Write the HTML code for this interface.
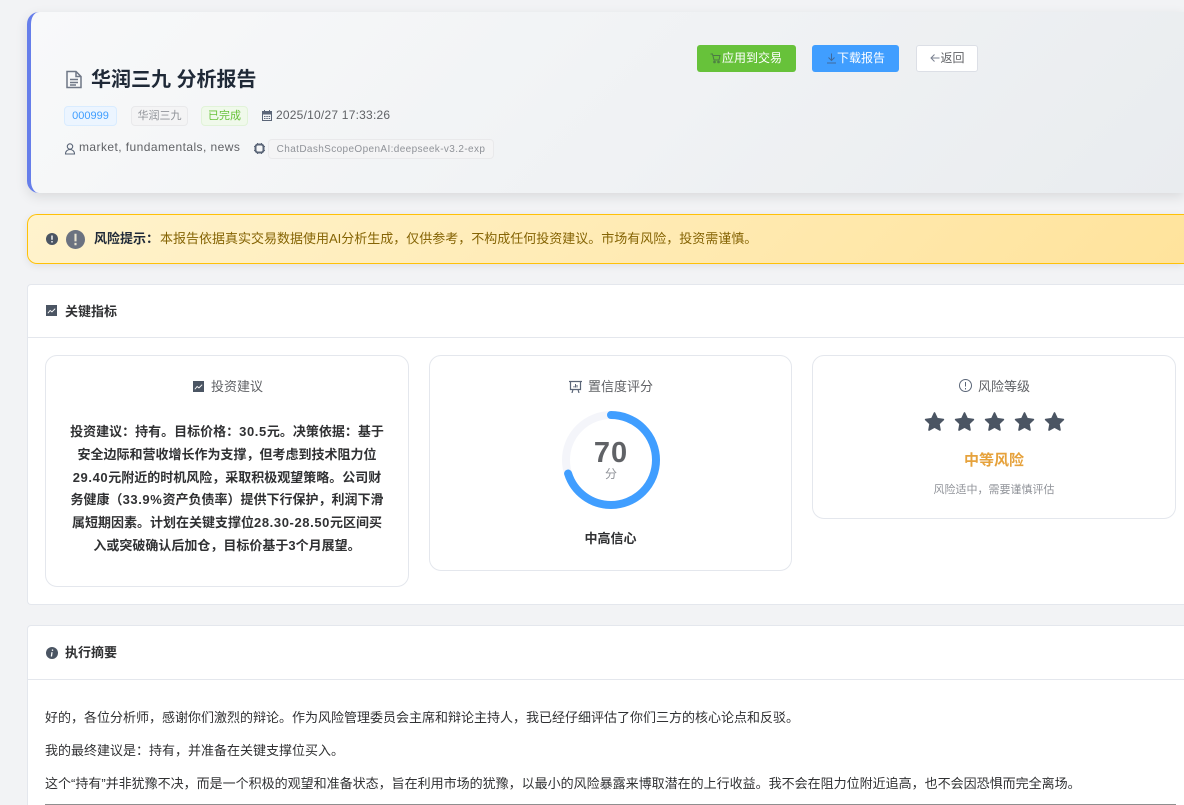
<!DOCTYPE html>
<html lang="zh-CN"><head><meta charset="utf-8"><title>华润三九 分析报告</title>
<style>
html,body{margin:0;padding:0;width:1184px;height:805px;overflow:hidden;background:#f2f3f5}
body{position:relative;font-family:"WenQuanYi Zen Hei","Liberation Sans","Noto Sans CJK SC",sans-serif;color:#606266}
.a{position:absolute;white-space:nowrap;line-height:1.2}
.card{position:absolute;box-sizing:border-box;background:#fff;border:1px solid #e4e7ed;border-right:0;border-radius:4px 0 0 4px}
.in{position:absolute;box-sizing:border-box;background:#fff;border:1px solid #e4e7ed;border-radius:12px}
.tag{position:absolute;box-sizing:border-box;height:20px;line-height:18px;font-size:11px;text-align:center;border-radius:4px;border:1px solid}
.btn{position:absolute;box-sizing:border-box;height:27px;line-height:26px;font-size:12px;text-align:center;border-radius:3px;white-space:nowrap}
svg{position:absolute;display:block}
.c{text-align:center}
.n{letter-spacing:.6px}
</style></head><body>
<div style="position:absolute;left:27px;top:12px;width:1157px;height:181px;box-sizing:border-box;border-left:4px solid #667eea;border-radius:12px 0 0 12px;background:linear-gradient(135deg,#f8f9fa,#e9ecef);box-shadow:0 4px 12px rgba(0,0,0,.1)"></div>

<svg style="left:65px;top:70px" width="18" height="19" viewBox="0 0 18 19" fill="none" stroke="#6f7786" stroke-width="1.5"><path d="M2 1.500h9l5 5v11H2zM11 1.500v5h5M5 9.500h8M5 12.500h8M5 15h6"/></svg>
<div class="a" style="left:91px;top:68px;font-size:20px;font-weight:700;color:#1f2937">华润三九 分析报告</div>

<div class="tag" style="left:64px;top:106px;width:53px;background:#ecf5ff;border-color:#d9ecff;color:#409eff">000999</div>
<div class="tag" style="left:131px;top:106px;width:57px;background:#f4f4f5;border-color:#e9e9eb;color:#909399">华润三九</div>
<div class="tag" style="left:201px;top:106px;width:47px;background:#f0f9eb;border-color:#e1f3d8;color:#67c23a">已完成</div>
<svg style="left:261px;top:110px" width="12" height="12" viewBox="0 0 12 12"><path fill="#5b6678" d="M1 1h2V0h1v1h4V0h1v1h2v10H1zM2 4.500V10h8V4.500z"/><path fill="#5b6678" d="M3 6h1.500v1H3zM5.300 6h1.500v1H5.300zM7.600 6h1.500v1H7.600zM3 8h1.500v1H3zM5.300 8h1.500v1H5.300zM7.600 8h1.500v1H7.600z"/></svg>
<div class="a" style="left:276px;top:108px;font-size:12px;letter-spacing:.22px;color:#606266">2025/10/27 17:33:26</div>

<svg style="left:64px;top:142px" width="12" height="13" viewBox="0 0 12 13" fill="none" stroke="#5b6678" stroke-width="1.100"><circle cx="6" cy="4.500" r="2.700"/><path d="M1.500 12c0-6 9-6 9 0z"/></svg>
<div class="a" style="left:79px;top:140px;font-size:12px;letter-spacing:.43px;color:#606266">market, fundamentals, news</div>
<svg style="left:253px;top:142px" width="13" height="13" viewBox="0 0 13 13" fill="none" stroke="#5b6678" stroke-width="2"><rect x="2.500" y="2.500" width="8" height="8" rx="2.500"/><path stroke-width="1" d="M4.500 1v1.500M8.500 1v1.500M4.500 10.500V12M8.500 10.500V12M1 4.500h1.500M1 8.500h1.500M10.500 4.500H12M10.500 8.500H12"/></svg>
<div class="tag" style="left:268px;top:139px;width:226px;line-height:19px;background:#f4f4f5;border-color:#e9e9eb;color:#909399;font-size:10px;letter-spacing:.38px">ChatDashScopeOpenAI:deepseek-v3.2-exp</div>

<div class="btn" style="left:697px;top:45px;width:99px;background:#67c23a;color:#fff"><svg style="left:13px;top:8px" width="11" height="11" viewBox="0 0 11 11" fill="none" stroke="#4c7a45" stroke-width="1"><path d="M0.500 1h2l1.500 6h5l1-4.500H3"/><circle cx="4.500" cy="9" r=".8"/><circle cx="8.500" cy="9" r=".8"/></svg><span style="padding-left:11px">应用到交易</span></div>
<div class="btn" style="left:812px;top:45px;width:87px;background:#409eff;color:#fff"><svg style="left:14px;top:8px" width="11" height="11" viewBox="0 0 11 11" fill="none" stroke="#3f6a9e" stroke-width="1"><path d="M5.500 0.500v6.500M2.500 4.500l3 3 3-3M1 10h9"/></svg><span style="padding-left:11px">下载报告</span></div>
<div class="btn" style="left:916px;top:45px;width:62px;background:#fff;border:1px solid #dcdfe6;line-height:24px;color:#606266"><svg style="left:13px;top:7px" width="10" height="10" viewBox="0 0 10 10" fill="none" stroke="#7a8090" stroke-width="1"><path d="M9.500 5H1M4.500 1.500L1 5l3.500 3.500"/></svg><span style="padding-left:11px">返回</span></div>

<div style="position:absolute;left:27px;top:214px;width:1157px;height:50px;box-sizing:border-box;border:1px solid #ffc107;border-right:0;border-radius:10px 0 0 10px;background:linear-gradient(135deg,#fff3cd,#ffe39c);box-shadow:0 2px 8px rgba(0,0,0,.08)"></div>
<svg style="left:46px;top:233px" width="12" height="12" viewBox="0 0 12 12"><circle cx="6" cy="6" r="6" fill="#4b5563"/><path stroke="#fff" stroke-width="1.400" d="M6 2.500v4.200M6 8v1.500"/></svg>
<svg style="left:66px;top:230px" width="19" height="19" viewBox="0 0 20 20"><circle cx="10" cy="10" r="10" fill="#6b7280"/><path stroke="#e9e4d0" stroke-width="2.200" d="M10 4v8M10 13.500v2.500"/></svg>
<div class="a" style="left:94px;top:231px;font-size:13px;font-weight:700;color:#1f2937">风险提示：</div>
<div class="a" style="left:160px;top:231px;font-size:13px;color:#856404">本报告依据真实交易数据使用AI分析生成，仅供参考，不构成任何投资建议。市场有风险，投资需谨慎。</div>

<div class="card" style="left:27px;top:284px;width:1157px;height:321px"></div>
<div style="position:absolute;left:28px;top:337px;width:1156px;height:1px;background:#e4e7ed"></div>
<svg style="left:46px;top:305px" width="11" height="11" viewBox="0 0 12 12"><rect width="12" height="12" fill="#4b5563"/><path fill="none" stroke="#fff" stroke-width="1" d="M2 9l2.500-3 2 1.500L10 4"/></svg>
<div class="a" style="left:65px;top:304px;font-size:13px;color:#303133;font-weight:700">关键指标</div>

<div class="in" style="left:45px;top:355px;width:364px;height:232px"></div>
<svg style="left:193px;top:381px" width="11" height="11" viewBox="0 0 12 12"><rect width="12" height="12" fill="#4b5563"/><path fill="none" stroke="#fff" stroke-width="1" d="M2 9l2.500-3 2 1.500L10 4"/></svg>
<div class="a" style="left:211px;top:379px;font-size:13px;color:#606266">投资建议</div>
<div class="a c" style="left:62px;top:421px;width:330px;font-size:13px;line-height:22.800px;font-weight:700;color:#303133">投资建议：持有。目标价格：<span class="n">30.5</span>元。决策依据：基于<br>安全边际和营收增长作为支撑，但考虑到技术阻力位<br><span class="n">29.40</span>元附近的时机风险，采取积极观望策略。公司财<br>务健康（<span class="n">33.9%</span>资产负债率）提供下行保护，利润下滑<br>属短期因素。计划在关键支撑位<span class="n">28.30-28.50</span>元区间买<br>入或突破确认后加仓，目标价基于3个月展望。</div>

<div class="in" style="left:429px;top:355px;width:363px;height:216px"></div>
<svg style="left:569px;top:380px" width="13" height="13" viewBox="0 0 13 13" fill="none" stroke="#5b6678" stroke-width="1.200"><path d="M0 1.500h13M1.500 1.500v8h10v-8M4 9.500l-1 3.500M9 9.500l1 3.500"/><path stroke-width="1" d="M5 7.500V6M6.500 7.500V4M8 7.500V5"/></svg>
<div class="a" style="left:588px;top:379px;font-size:13px;color:#606266">置信度评分</div>
<svg style="left:561px;top:410px" width="100" height="100" viewBox="0 0 100 100" fill="none"><circle cx="50" cy="50" r="45" stroke="#f4f5fa" stroke-width="8"/><circle cx="50" cy="50" r="45" stroke="#409eff" stroke-width="8" stroke-linecap="round" stroke-dasharray="197.900 282.700" transform="rotate(-90 50 50)"/></svg>
<div class="a c" style="left:561px;top:436px;width:100px;font-size:29px;letter-spacing:1px;font-weight:700;color:#606266">70</div>
<div class="a c" style="left:561px;top:467px;width:100px;font-size:12px;color:#909399">分</div>
<div class="a c" style="left:429px;top:531px;width:363px;font-size:13px;font-weight:700;color:#303133">中高信心</div>

<div class="in" style="left:812px;top:355px;width:364px;height:164px"></div>
<svg style="left:959px;top:379px" width="13" height="13" viewBox="0 0 13 13" fill="none" stroke="#5b6678" stroke-width="1"><circle cx="6.500" cy="6.500" r="6"/><path d="M6.500 3v4.500M6.500 9v1.500"/></svg>
<div class="a" style="left:978px;top:379px;font-size:13px;color:#606266">风险等级</div>
<svg style="left:924px;top:411px" width="142" height="22" viewBox="0 0 142 22" fill="#4b5563" stroke="#4b5563" stroke-width="1.600" stroke-linejoin="round"><path d="M10.500 2l2.700 5.700 6.200.8-4.500 4.300 1.100 6.200-5.500-3-5.500 3 1.100-6.200L1.600 8.500l6.200-.8z"/><path transform="translate(30)" d="M10.500 2l2.700 5.700 6.200.8-4.500 4.300 1.100 6.200-5.500-3-5.500 3 1.100-6.200L1.600 8.500l6.200-.8z"/><path transform="translate(60)" d="M10.500 2l2.700 5.700 6.200.8-4.500 4.300 1.100 6.200-5.500-3-5.500 3 1.100-6.200L1.600 8.500l6.200-.8z"/><path transform="translate(90)" d="M10.500 2l2.700 5.700 6.200.8-4.500 4.300 1.100 6.200-5.500-3-5.500 3 1.100-6.200L1.600 8.500l6.200-.8z"/><path transform="translate(120)" d="M10.500 2l2.700 5.700 6.200.8-4.500 4.300 1.100 6.200-5.500-3-5.500 3 1.100-6.200L1.600 8.500l6.200-.8z"/></svg>
<div class="a c" style="left:812px;top:452px;width:364px;font-size:15px;font-weight:700;color:#e6a23c">中等风险</div>
<div class="a c" style="left:812px;top:484px;width:364px;font-size:11px;color:#909399">风险适中，需要谨慎评估</div>

<div class="card" style="left:27px;top:625px;width:1157px;height:180px;border-bottom:0;border-radius:4px 0 0 0"></div>
<div style="position:absolute;left:28px;top:679px;width:1156px;height:1px;background:#e4e7ed"></div>
<svg style="left:46px;top:647px" width="12" height="12" viewBox="0 0 12 12"><circle cx="6" cy="6" r="6" fill="#4b5563"/><path stroke="#fff" stroke-width="1.300" d="M6.500 2.500v1.400M6 5.200L5.400 9.500"/></svg>
<div class="a" style="left:65px;top:645px;font-size:13px;color:#303133;font-weight:700">执行摘要</div>
<div class="a" style="left:45px;top:710px;font-size:13px;color:#303133">好的，各位分析师，感谢你们激烈的辩论。作为风险管理委员会主席和辩论主持人，我已经仔细评估了你们三方的核心论点和反驳。</div>
<div class="a" style="left:45px;top:743px;font-size:13px;color:#303133">我的最终建议是：持有，并准备在关键支撑位买入。</div>
<div class="a" style="left:45px;top:776px;font-size:13px;color:#303133">这个“持有”并非犹豫不决，而是一个积极的观望和准备状态，旨在利用市场的犹豫，以最小的风险暴露来博取潜在的上行收益。我不会在阻力位附近追高，也不会因恐惧而完全离场。</div>
<div style="position:absolute;left:45px;top:804px;width:1131px;height:1px;background:#8f8f8f"></div>
</body></html>
